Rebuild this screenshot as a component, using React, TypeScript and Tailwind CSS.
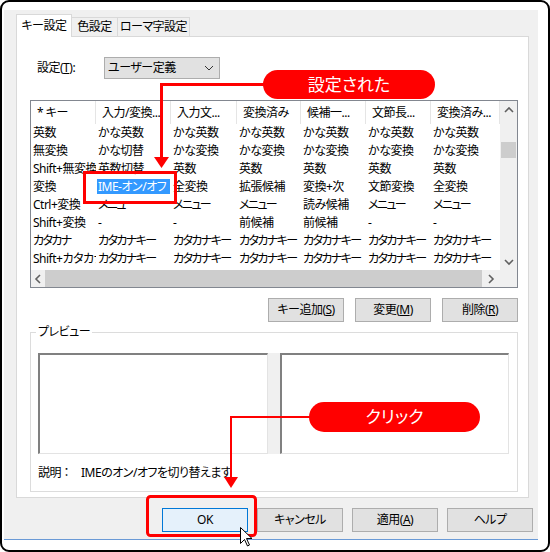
import React from "react";

const cols = [65, 75, 66, 64, 65, 65, 69];
const headers = ["* キー", "入力/変換...", "入力文...", "変換済み", "候補一...", "文節長...", "変換済み..."];
const rows = [
  ["英数", "かな英数", "かな英数", "かな英数", "かな英数", "かな英数", "かな英数"],
  ["無変換", "かな切替", "かな変換", "かな変換", "かな変換", "かな変換", "かな変換"],
  ["Shift+無変換", "英数切替", "英数", "英数", "英数", "英数", "英数"],
  ["変換", "IME-オン/オフ", "全変換", "拡張候補", "変換+次", "文節変換", "全変換"],
  ["Ctrl+変換", "メニュー", "メニュー", "メニュー", "読み候補", "メニュー", "メニュー"],
  ["Shift+変換", "-", "-", "前候補", "前候補", "-", "-"],
  ["カタカナ", "カタカナキー", "カタカナキー", "カタカナキー", "カタカナキー", "カタカナキー", "カタカナキー"],
  ["Shift+カタカナ", "カタカナキー", "カタカナキー", "カタカナキー", "カタカナキー", "カタカナキー", "カタカナキー"],
];

// katakana-only cells are squeezed, the reference UI font has narrow kana
const isKana = (s: string) => /^[ァ-ヶー]{3,}$/.test(s);

function Btn({ children, w = "w-[76px]", primary }: { children: React.ReactNode; w?: string; primary?: boolean }) {
  return (
    <div
      className={`${w} h-[24px] flex items-center justify-center border ${
        primary ? "bg-[#e5f1fb] border-[#0078d7]" : "bg-[#e1e1e1] border-[#adadad]"
      }`}
    >
      {children}
    </div>
  );
}

function Chevron({ dir }: { dir: "up" | "down" | "left" | "right" }) {
  const pts =
    dir === "up"
      ? "1,6 5,2 9,6"
      : dir === "down"
      ? "1,2 5,6 9,2"
      : dir === "left"
      ? "6,1 2,5 6,9"
      : "2,1 6,5 2,9";
  const size = dir === "up" || dir === "down" ? { w: 10, h: 8 } : { w: 8, h: 10 };
  return (
    <svg width={size.w} height={size.h} viewBox={`0 0 ${size.w} ${size.h}`}>
      <polyline points={pts} fill="none" stroke="#606060" strokeWidth="1.6" />
    </svg>
  );
}

function ListView() {
  return (
    <div className="ml-[13px] mt-[21px] w-[488px] h-[188px] border border-[#828790] flex flex-col">
      <div className="flex h-[169px]">
        <div className="w-[469px] overflow-hidden">
          <div className="flex h-[23px] items-center">
            {headers.map((h, i) => (
              <div
                key={i}
                style={{ width: cols[i] }}
                className="shrink-0 h-full leading-[23px] pl-[6px] border-r border-[#e5e5e5] overflow-hidden whitespace-nowrap"
              >
                {h}
              </div>
            ))}
          </div>
          {rows.map((r, ri) => (
            <div key={ri} className="flex h-[18px]">
              {r.map((c, ci) => (
                <div
                  key={ci}
                  style={{ width: cols[ci] }}
                  className={`shrink-0 leading-[18px] pl-[2px] overflow-hidden whitespace-nowrap ${
                    isKana(c) ? "tracking-[-1.6px]" : ""
                  }`}
                >
                  {ri === 3 && ci === 1 ? (
                    <span className="inline-block w-[73px] h-[15px] leading-[15px] bg-[#3399ff] text-white -ml-[1px] pl-[1px]">
                      {c}
                    </span>
                  ) : (
                    c
                  )}
                </div>
              ))}
            </div>
          ))}
        </div>
        <div className="w-[17px] bg-[#f0f0f0] flex flex-col items-center">
          <div className="h-[17px] flex items-center justify-center">
            <Chevron dir="up" />
          </div>
          <div className="mt-[24px] w-[15px] h-[16px] bg-[#cdcdcd]" />
          <div className="flex-1" />
          <div className="h-[17px] flex items-center justify-center">
            <Chevron dir="down" />
          </div>
        </div>
      </div>
      <div className="flex h-[17px]">
        <div className="w-[14px] bg-[#f0f0f0] flex items-center justify-center">
          <Chevron dir="left" />
        </div>
        <div className="w-[437px] bg-[#cdcdcd]" />
        <div className="w-[18px] bg-[#f0f0f0] flex items-center justify-center">
          <Chevron dir="right" />
        </div>
        <div className="w-[17px] bg-[#f0f0f0]" />
      </div>
    </div>
  );
}

function Overlay() {
  return (
    <div className="absolute -left-[2px] -top-[2px] w-[550px] h-[552px] pointer-events-none tracking-normal">
      <svg className="absolute left-0 top-0" width="550" height="552" viewBox="0 0 550 552">
        <polyline points="264,84.5 161.5,84.5 161.5,158" fill="none" stroke="#ff0000" strokeWidth="3" />
        <polygon points="154,157 169,157 161.5,168" fill="#ff0000" />
        <rect x="84.5" y="172.5" width="91" height="30" fill="none" stroke="#ff0000" strokeWidth="3" />
        <polyline points="310,417 231,417 231,477" fill="none" stroke="#ff0000" strokeWidth="2" />
        <polygon points="224,477 238,477 231,488" fill="#ff0000" />
        <rect x="147.5" y="496.5" width="108" height="39" rx="3" fill="none" stroke="#ff0000" strokeWidth="3" />
        <path
          d="M240.5 527.5 L240.5 543.5 L244.5 539.5 L247.5 546 L249.5 545 L246.5 538.5 L252 538.5 Z"
          fill="#ffffff"
          stroke="#000000"
          strokeWidth="1"
        />
      </svg>
      <div className="absolute left-[263px] top-[70px] w-[172px] h-[29px] rounded-full bg-[#ff0000] text-white text-[17px] leading-[29px] text-center">
        設定された
      </div>
      <div className="absolute left-[309px] top-[402px] w-[171px] h-[30px] rounded-full bg-[#ff0000] text-white text-[17px] leading-[30px] text-center">
        クリック
      </div>
    </div>
  );
}

export default function App() {
  return (
    <div className="relative w-[550px] h-[552px] bg-white border-2 border-black rounded-[9px] overflow-hidden font-['Noto_Sans','Noto_Sans_CJK_JP',sans-serif] [font-feature-settings:'palt'] text-[12px] tracking-[-0.5px] text-black">
      <div className="ml-[2px] mt-[8px] w-[534px] h-[530px] bg-[#f0f0f0] border-b border-[#6a9ad6] flex flex-col">
        {/* tabs */}
        <div className="ml-[12px] mt-[4px] h-[22px] flex items-end">
          <div className="relative z-10 w-[56px] h-[23px] -mb-[1px] bg-white border border-b-0 border-[#d9d9d9] leading-[21px] text-center">
            キー設定
          </div>
          <div className="w-[46px] h-[19px] border border-l-0 border-b-0 border-[#d9d9d9] leading-[18px] text-center">
            色設定
          </div>
          <div className="w-[72px] h-[19px] border border-l-0 border-b-0 border-[#d9d9d9] leading-[18px] text-center">
            ローマ字設定
          </div>
        </div>
        {/* tab panel */}
        <div className="ml-[12px] w-[513px] h-[462px] bg-white border border-[#d9d9d9] flex flex-col">
          <div className="mt-[20px] pl-[20px] flex items-center h-[22px]">
            <div className="w-[67px]">
              設定(<span className="underline">T</span>):
            </div>
            <div className="w-[116px] h-[22px] bg-[#e1e1e1] border border-[#adadad] flex items-center justify-between pl-[3px] pr-[5px]">
              <span>ユーザー定義</span>
              <svg width="10" height="6" viewBox="0 0 10 6">
                <polyline points="1,1 5,5 9,1" fill="none" stroke="#333" strokeWidth="1" />
              </svg>
            </div>
          </div>
          <ListView />
          <div className="mt-[10px] pr-[10px] flex justify-end gap-[11px]">
            <Btn>
              キー追加(<span className="underline">S</span>)
            </Btn>
            <Btn>
              変更(<span className="underline">M</span>)
            </Btn>
            <Btn>
              削除(<span className="underline">R</span>)
            </Btn>
          </div>
          {/* preview group */}
          <div className="relative ml-[13px] mt-[10px] w-[488px] h-[160px] border border-[#dcdcdc] flex flex-col">
            <div className="absolute left-[5px] -top-[9px] bg-white px-[2px] leading-[16px]">プレビュー</div>
            <div className="mt-[20px] ml-[7px] flex h-[101px]">
              <div className="w-[230px] bg-white border-t-2 border-l-2 border-[#808080] border-r border-b border-r-[#e3e3e3] border-b-[#e3e3e3]" />
              <div className="w-[12px] bg-[#f0f0f0]" />
              <div className="w-[229px] bg-white border-t-2 border-l-2 border-[#808080] border-r border-b border-r-[#e3e3e3] border-b-[#e3e3e3]" />
            </div>
            <div className="mt-[11px] ml-[7px] leading-[16px] flex">
              <span className="w-[43px]">説明 ：</span>
              <span>IMEのオン/オフを切り替えます</span>
            </div>
          </div>
        </div>
        {/* dialog buttons */}
        <div className="mt-[10px] pr-[5px] flex justify-end gap-[9px]">
          <Btn w="w-[86px]" primary>
            OK
          </Btn>
          <Btn w="w-[86px]">キャンセル</Btn>
          <Btn w="w-[86px]">
            適用(<span className="underline">A</span>)
          </Btn>
          <Btn w="w-[86px]">ヘルプ</Btn>
        </div>
      </div>
      <Overlay />
    </div>
  );
}
